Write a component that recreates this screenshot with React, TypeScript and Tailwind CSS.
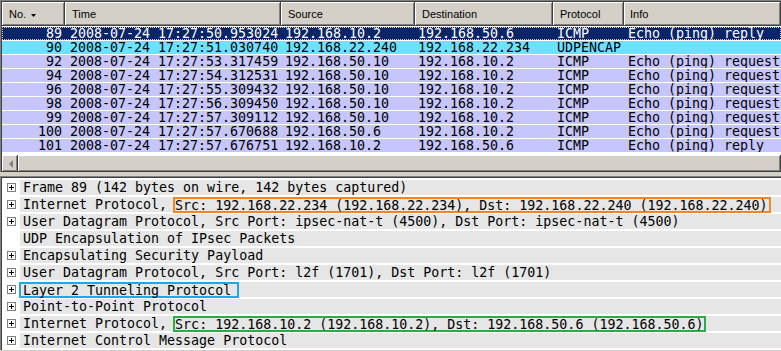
import React from "react";

type Packet = {
  no: string;
  time: string;
  src: string;
  dst: string;
  proto: string;
  info: string;
  kind: "sel" | "udp" | "icmp";
};

const packets: Packet[] = [
  { no: "89", time: "2008-07-24 17:27:50.953024", src: "192.168.10.2", dst: "192.168.50.6", proto: "ICMP", info: "Echo (ping) reply", kind: "sel" },
  { no: "90", time: "2008-07-24 17:27:51.030740", src: "192.168.22.240", dst: "192.168.22.234", proto: "UDPENCAP", info: "", kind: "udp" },
  { no: "92", time: "2008-07-24 17:27:53.317459", src: "192.168.50.10", dst: "192.168.10.2", proto: "ICMP", info: "Echo (ping) request", kind: "icmp" },
  { no: "94", time: "2008-07-24 17:27:54.312531", src: "192.168.50.10", dst: "192.168.10.2", proto: "ICMP", info: "Echo (ping) request", kind: "icmp" },
  { no: "96", time: "2008-07-24 17:27:55.309432", src: "192.168.50.10", dst: "192.168.10.2", proto: "ICMP", info: "Echo (ping) request", kind: "icmp" },
  { no: "98", time: "2008-07-24 17:27:56.309450", src: "192.168.50.10", dst: "192.168.10.2", proto: "ICMP", info: "Echo (ping) request", kind: "icmp" },
  { no: "99", time: "2008-07-24 17:27:57.309112", src: "192.168.50.10", dst: "192.168.10.2", proto: "ICMP", info: "Echo (ping) request", kind: "icmp" },
  { no: "100", time: "2008-07-24 17:27:57.670688", src: "192.168.50.6", dst: "192.168.10.2", proto: "ICMP", info: "Echo (ping) request", kind: "icmp" },
  { no: "101", time: "2008-07-24 17:27:57.676751", src: "192.168.10.2", dst: "192.168.50.6", proto: "ICMP", info: "Echo (ping) reply", kind: "icmp" },
];

const raised =
  "shadow-[inset_-1px_-1px_0_#404040,inset_1px_1px_0_#ffffff,inset_-2px_-2px_0_#808080]";

function HeaderCell({ label, width, arrow }: { label: string; width: string; arrow?: boolean }) {
  return (
    <div className={`${width} shrink-0 h-full flex items-center pl-[7px] bg-[#d4d0c8] ${raised}`}>
      <span>{label}</span>
      {arrow && (
        <svg width="5" height="3" viewBox="0 0 5 3" className="ml-[5px] mt-[2px]">
          <path d="M0 0h5L2.5 3z" fill="#000" />
        </svg>
      )}
    </div>
  );
}

function PacketRow({ p }: { p: Packet }) {
  const bg =
    p.kind === "sel"
      ? "bg-[#0a246a] text-white outline outline-1 outline-dotted outline-offset-[-1px] outline-[#e8c890]"
      : p.kind === "udp"
        ? "bg-[#70e0ff] text-black"
        : "bg-[#c6c6fc] text-black";
  return (
    <div className={`flex h-[13px] mb-[1px] items-center whitespace-pre ${bg}`}>
      <div className="w-[63px] shrink-0 text-right pr-[3px]">{p.no}</div>
      <div className="w-[216px] shrink-0 pl-[5px]">{p.time}</div>
      <div className="w-[134px] shrink-0 pl-[4px]">{p.src}</div>
      <div className="w-[138px] shrink-0 pl-[3px]">{p.dst}</div>
      <div className="w-[71px] shrink-0 pl-[4px]">{p.proto}</div>
      <div className="flex-1 pl-[4px] overflow-hidden">{p.info}</div>
    </div>
  );
}

function Expander() {
  return (
    <svg width="9" height="9" viewBox="0 0 9 9">
      <rect x="0.5" y="0.5" width="8" height="8" fill="#fff" stroke="#808080" />
      <path d="M2 4.5h5M4.5 2v5" stroke="#000" />
    </svg>
  );
}

function DetailRow({ children, expand = true }: { children: React.ReactNode; expand?: boolean }) {
  return (
    <div className="flex h-[15px] mb-[2px]">
      <div className="w-[18px] shrink-0 flex items-center pl-[5px]">{expand && <Expander />}</div>
      <div className="flex-1 bg-[#e6e6e6] flex items-center pl-[3px] whitespace-pre">{children}</div>
    </div>
  );
}

export default function App() {
  return (
    <div className="w-[781px] h-[351px] overflow-hidden bg-[#d4d0c8] font-['DejaVu_Sans_Mono',monospace] text-[13.3px] leading-[13px] text-black">
      {/* packet list */}
      <div className="border-l border-t border-[#808080]">
        <div className="border-l border-t border-[#404040]">
          <div className="flex h-[24px] font-['Liberation_Sans',Arial,sans-serif] text-[11px]">
            <HeaderCell label="No." width="w-[63px]" arrow />
            <HeaderCell label="Time" width="w-[216px]" />
            <HeaderCell label="Source" width="w-[134px]" />
            <HeaderCell label="Destination" width="w-[138px]" />
            <HeaderCell label="Protocol" width="w-[71px]" />
            <div className={`flex-1 h-full flex items-center pl-[6px] bg-[#d4d0c8] ${raised}`}>Info</div>
          </div>
          <div className="h-[129px] bg-white pt-[1px]">
            {packets.map((p) => (
              <PacketRow key={p.no} p={p} />
            ))}
          </div>
          <div className="flex h-[17px] bg-[#d4d0c8]">
            <div className={`w-[16px] shrink-0 flex items-center justify-center ${raised}`}>
              <svg width="5" height="8" viewBox="0 0 5 8">
                <path d="M5 0v8L1 4z" fill="#808080" />
              </svg>
            </div>
            <div className={`flex-1 ${raised}`} />
          </div>
        </div>
      </div>

      <div className="h-[4px]" />

      {/* packet details */}
      <div className="border-l border-t border-[#808080]">
        <div className="border-l border-t border-[#404040] bg-white pt-[2px] h-[173px]">
          <DetailRow>Frame 89 (142 bytes on wire, 142 bytes captured)</DetailRow>
          <DetailRow>
            {"Internet Protocol, "}
            <span className="inline-block h-[12px] pr-[1px] shadow-[0_0_0_2px_#f5851f]">
              Src: 192.168.22.234 (192.168.22.234), Dst: 192.168.22.240 (192.168.22.240)
            </span>
          </DetailRow>
          <DetailRow>User Datagram Protocol, Src Port: ipsec-nat-t (4500), Dst Port: ipsec-nat-t (4500)</DetailRow>
          <DetailRow expand={false}>UDP Encapsulation of IPsec Packets</DetailRow>
          <DetailRow>Encapsulating Security Payload</DetailRow>
          <DetailRow>User Datagram Protocol, Src Port: l2f (1701), Dst Port: l2f (1701)</DetailRow>
          <DetailRow>
            <span className="inline-block h-[12px] ml-[-2px] pl-[2px] pr-[6px] shadow-[0_0_0_2px_#1ca9e6]">
              Layer 2 Tunneling Protocol
            </span>
          </DetailRow>
          <DetailRow>Point-to-Point Protocol</DetailRow>
          <DetailRow>
            {"Internet Protocol, "}
            <span className="inline-block h-[12px] pr-[1px] shadow-[0_0_0_2px_#27ae4b]">
              Src: 192.168.10.2 (192.168.10.2), Dst: 192.168.50.6 (192.168.50.6)
            </span>
          </DetailRow>
          <DetailRow>Internet Control Message Protocol</DetailRow>
        </div>
      </div>
    </div>
  );
}
